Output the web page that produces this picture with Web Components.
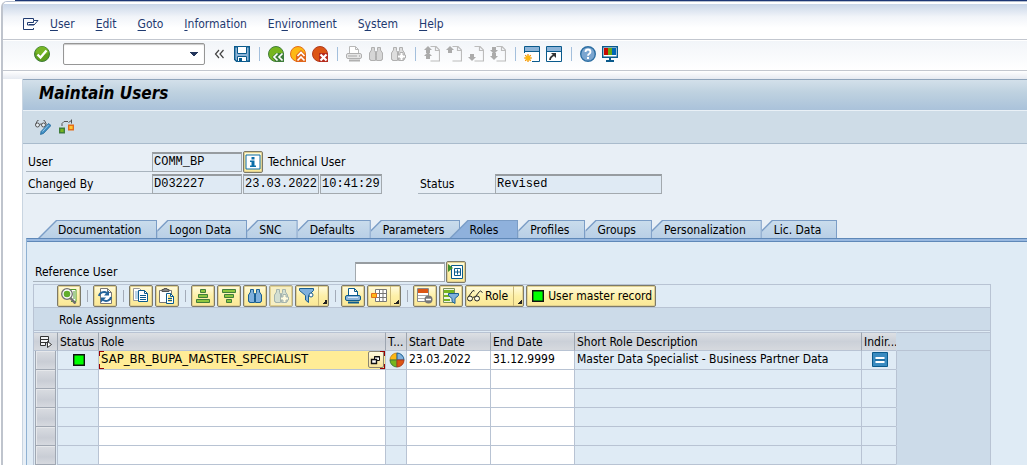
<!DOCTYPE html>
<html lang="en">
<head>
<meta charset="utf-8">
<title>Maintain Users</title>
<style>
body { margin: 0; background: #fff; font: 12px/16px "DejaVu Sans Condensed", "Noto Sans", sans-serif; color: #000; }
</style>
</head>
<body>
<maintain-users></maintain-users>
<script>
const RESET = `
  *, *::before, *::after { box-sizing: border-box; }
  button, input { font: inherit; color: inherit; margin: 0; padding: 0; border: 0; background: none; border-radius: 0; outline: none; }
`;

const finder = (stroke, fill) => `<g fill="${fill}" stroke="${stroke}"><path d="M3.5 1.5h3v3l1 2v8h-5v-1h-1V7l2-3zM9.500 1.500h3V4l2 3v6.500h-1v1h-5v-8l1-2z"/><path d="M7.500 5.500h1v4h-1z"/></g>`;
const page = '<path d="M6.500.5h5.500l3.500 3.500v11h-9M11.500.5v4h4" fill="none" stroke="#bcbcbc" stroke-width="1.200"/>';
const up = (y) => `<path d="M4 ${y}l4 4H6v3H2V${y + 4}H0z" fill="#ababab"/>`;
const down = (y) => `<path d="M4 ${y + 7}l4-4H6v-3H2v3H0z" fill="#ababab"/>`;

const ICONS = {
  menu: '<path d="M10.500 4V2.500H.5v11h10V12" fill="none" stroke="#1f3a70"/><path d="M4.500 6.500h6v-2l4.500 0-4 4.500h-6.500z" fill="#fff" stroke="#1f3a70"/><path d="M6 8.500h5" stroke="#1f3a70"/>',
  check: '<circle cx="8" cy="8" r="7.500" fill="#5f9e1c" stroke="#3f7d3a"/><path d="M1.500 7a6.500 6.500 0 0 1 13 0q-6 3-13 0z" fill="#76b526"/><path d="M3.500 8.500l3 3 6-7" fill="none" stroke="#fff" stroke-width="2.400"/>',
  collapse: '<path d="M7 4L3.500 8 7 12M11.500 4L8 8l3.500 4" fill="none" stroke="#444" stroke-width="1.200"/>',
  save: '<path d="M.7.7h14.600v14.600H2.500L.7 13.500z" fill="#8db4d8" stroke="#0a5a8c" stroke-width="1.400"/><path d="M3.500.5h9v7h-9z" fill="#fff" stroke="#0a5a8c"/><path d="M3.500 10.500h9v5h-9z" fill="#fff" stroke="#0a5a8c"/><path d="M5 12h3v3H5z" fill="#0a5a8c"/>',
  back: '<circle cx="8" cy="8" r="7.500" fill="#76b51f" stroke="#3f7d3a"/><path d="M4 11l4-4h8v9H8z" fill="#3f7d3a"/><path d="M9.500 7.500L6 11l3.500 3.500M14.500 7.500L11 11l3.500 3.500" fill="none" stroke="#fff" stroke-width="1.700"/>',
  exit: '<circle cx="8" cy="8" r="7.500" fill="#fdb813" stroke="#e36c1a"/><path d="M6 9l5-5 5 5v7H6z" fill="#e0661c"/><path d="M7.500 10L11 6.500l3.500 3.500M7.500 14.500L11 11l3.500 3.500" fill="none" stroke="#fff" stroke-width="1.700"/>',
  cancel: '<circle cx="8" cy="8" r="7.500" fill="#dc5514" stroke="#b03a1c"/><path d="M7 7h9v9H7z" fill="#b52a1c"/><path d="M8.500 8.500l6 6M14.500 8.500l-6 6" fill="none" stroke="#fff" stroke-width="2.200"/>',
  printoff: '<path d="M3.500 8V.5h6l3 3V8M9.500.5v3h3" fill="#fff" stroke="#b8b8b8"/><rect x=".5" y="7.500" width="15" height="5" rx="1.500" fill="#e6e6e6" stroke="#b0b0b0"/><path d="M2 10h9" stroke="#a8a8a8"/><path d="M13 10h1" stroke="#999"/><path d="M3 14.500h11" stroke="#b0b0b0" stroke-width="2"/>',
  findoff: finder('#b0b0b0', '#d6d6d6'),
  findnextoff: finder('#b0b0b0', '#dedede') + '<path d="M10 6.500h3v2.500h2.500v3H13v2.500h-3V12H7.500V9H10z" fill="#fff" stroke="#b0b0b0"/>',
  firstpage: page + up(0) + up(6),
  prevpage: page + up(0),
  nextpage: page + down(8),
  lastpage: page + down(1) + down(7),
  newsession: '<path d="M.5.5h15v15h-15z" fill="#fff" stroke="#0a5a8c"/><path d="M1 1h14v4H1z" fill="#8db4d8"/><path d="M0 5.500h16" stroke="#0a5a8c"/><path d="M0 7h8v9H0z" fill="#fff"/><path d="M4 8v8M0 12h8M1.200 9.200l5.600 5.600M6.800 9.200l-5.600 5.600" stroke="#f08c00" stroke-width="1.200"/><circle cx="4" cy="12" r="2.600" fill="#fdb813"/>',
  shortcut: '<path d="M.5.5h15v15h-15z" fill="#fff" stroke="#0a5a8c"/><path d="M1 1h14v4H1z" fill="#8db4d8"/><path d="M0 5.500h16" stroke="#0a5a8c"/><path d="M4 14q0-3 4-5" fill="none" stroke="#333" stroke-width="1.800"/><path d="M5 7h5v5z" fill="#333"/>',
  help: '<circle cx="8" cy="8" r="7.300" fill="#7ba6d0" stroke="#2d6fa3" stroke-width="1.400"/><path d="M5.500 6q0-2.500 2.500-2.500T10.500 6q0 1-1.500 2-1 .6-1 1.800" fill="none" stroke="#fff" stroke-width="1.800"/><path d="M7 11h2v2H7z" fill="#fff"/>',
  monitor: '<path d="M.7.7h14.600v10.600H.7z" fill="#fff" stroke="#0a5a8c" stroke-width="1.400"/><path d="M2 2h4v7H2z" fill="#c80a00"/><path d="M6 2h4v7H6z" fill="#66a814"/><path d="M10 2h4v7h-4z" fill="#0067b5"/><path d="M7 12h2v2H7zM4 14h8v2H4z" fill="#0a5a8c"/>',
  editview: '<path d="M3.500 1.500h-1L.5 5.500M8.500 1.500h1l2 4M5 5.500q1-1.500 2 0" fill="none" stroke="#555"/><circle cx="2.500" cy="6" r="2" fill="#e6eef4" stroke="#555"/><circle cx="8.500" cy="6" r="2" fill="#e6eef4" stroke="#555"/><path d="M13.500 4.500l2.500 2-7.500 8-3 1 .5-3z" fill="#3f8fc4" stroke="#1a5f92" stroke-width=".7"/><path d="M7.500 12.500l6-6.500" stroke="#9ac8e6"/>',
  flow: '<path d="M.7 9.200h4.600v4.600H.7z" fill="#76b51f" stroke="#3f7d3a" stroke-width="1.400"/><path d="M9.700 6.200h4.600v4.600H9.700z" fill="#fdc733" stroke="#e36c1a" stroke-width="1.400"/><path d="M3 7V4.500l2-2h4M12.500 4.500V.5M12.500 1.500l-3 2" fill="none" stroke="#555"/>',
  info: '<path d="M1 1h14v14H1z" fill="#fff" stroke="#0a6da8"/><path d="M6.500 3h3v2.400h-3zM5 6.500h4.500V11.500H11V13H5v-1.500h1.500V8H5z" fill="#0a6da8"/>',
  insert: '<path d="M3.500 1.500h11v13h-11z" fill="#fff" stroke="#0a5a8c"/><path d="M6.500 4.500h6v7h-6z" fill="#fff" stroke="#0a5a8c"/><path d="M9.500 5.500v5M7 8h5" stroke="#0a5a8c"/><path d="M0 0l5 4-5 4z" fill="#3f8f2a"/>',
  detail: '<path d="M9 1.500h6v12h-5" fill="#fff" stroke="#4f9a28"/><path d="M12 4h2M12 6h2M12 8h2M12 10h2" stroke="#4f9a28"/><circle cx="6" cy="6" r="5.300" fill="#fff" stroke="#6f6f6f" stroke-width="1.300"/><circle cx="6" cy="6" r="3.300" fill="#62ad2b"/><path d="M9.500 10l5 5.500" stroke="#6f6f6f" stroke-width="2.600"/>',
  refresh: '<path d="M3.500.5h7l4 4v11h-11z" fill="#fff" stroke="#777"/><path d="M10.500.5v4h4" fill="none" stroke="#777"/><path d="M2 8a5 4.500 0 0 1 8-3" fill="none" stroke="#23639a" stroke-width="2"/><path d="M12 2.500v5H7z" fill="#23639a"/><path d="M14 9a5 4.500 0 0 1-8 3" fill="none" stroke="#23639a" stroke-width="2"/><path d="M4 14.500v-5h5z" fill="#23639a"/>',
  copy: '<path d="M.5.5h6l3 3v9h-9z" fill="#fff" stroke="#999"/><path d="M2 4h3M2 6h3M2 8h3M2 10h3" stroke="#7aa9cf"/><path d="M5.500 2.500h6l3 3v8h-9z" fill="#fff" stroke="#0a5a8c"/><path d="M11.500 2.500v3h3M7 7.500h6M7 9.500h6M7 11.500h6" fill="none" stroke="#0a5a8c"/>',
  paste: '<path d="M.5 2.500h12v12H.5z" fill="#fff" stroke="#777"/><path d="M3 3.500h7v-2H8v-1H5v1H3z" fill="#888" stroke="#555"/><path d="M7.500 5.500h4l3 3v7h-7z" fill="#fff" stroke="#0a5a8c"/><path d="M9 7h2v2h2v5H9z" fill="#f4e08a"/><path d="M11.500 5.500v3h3M9 10.500h4M9 12.500h4" fill="none" stroke="#0a5a8c"/>',
  sortup: '<g fill="#8cc63f" stroke="#3f7d3a"><path d="M5.500 1.500h5v3h-5zM3.500 6.500h9v3h-9zM1.500 11.500h13v3h-13z"/></g>',
  sortdown: '<g fill="#8cc63f" stroke="#3f7d3a"><path d="M1.500 1.500h13v3h-13zM3.500 6.500h9v3h-9zM5.500 11.500h5v3h-5z"/></g>',
  find: finder('#1a5f92', '#7fb0dc'),
  findnext: finder('#a5b4ae', '#d3dfd2') + '<path d="M10 6.500h3v2.500h2.500v3H13v2.500h-3V12H7.500V9H10z" fill="#fffbe0" stroke="#a5b4ae"/>',
  filter: '<path d="M.5.5h14v2l-5 5v7l-3-2.500V7.500l-6-5z" fill="#7fb0dc" stroke="#1a5f92"/><circle cx="12" cy="7" r="2" fill="#fff" stroke="#1a5f92"/>',
  print: '<path d="M3.500 8V.5h6l3 3V8M9.500.5v3h3" fill="#fff" stroke="#0a5a8c"/><rect x=".5" y="7.500" width="15" height="5" rx="1.500" fill="#8db4d8" stroke="#0a5a8c"/><path d="M3 9.500h10" stroke="#d9e9f6"/><path d="M3 14.500h11" stroke="#0a5a8c" stroke-width="2"/>',
  layout: '<path d="M4.500 1.500h11v12h-11zM4 5.500h11M4 9.500h11M8.500 1v12M12 1v12" fill="#fff" stroke="#777"/><path d="M.5 5.500h5v4h-5z" fill="#fdb813" stroke="#e36c1a"/>',
  delrow: '<path d="M.5.5h11v13H.5z" fill="#fff" stroke="#888"/><path d="M1 1h10v4H1z" fill="#dc5514"/><path d="M1 7.500h10M1 10.500h10" stroke="#aaa"/><circle cx="11.500" cy="11.500" r="4" fill="#777"/><path d="M9 11.500h5" stroke="#fff" stroke-width="1.600"/>',
  listfilter: '<path d="M.5.5h11v14H.5z" fill="#eef5e4" stroke="#7a8f5a"/><path d="M1 2h10v3H1zM1 7h7v2H1zM1 11h6v2H1z" fill="#76b51f"/><path d="M5.500 5.500h10v2l-3.500 3v5l-3-2v-3l-3.500-3z" fill="#7fb0dc" stroke="#1a5f92"/>',
  glasses: '<path d="M1.500 8.500L6 2.500l1.500.5M8.500 8.500l4-5 1-.5 2 1.500M6 9.500q1-1.500 2.500 0" fill="none" stroke="#222"/><circle cx="3" cy="10.500" r="2.500" fill="#fffbe0" stroke="#222"/><circle cx="10" cy="10.500" r="2.500" fill="#fffbe0" stroke="#222"/>',
  select: '<path d="M3.500 2.500h8v3h-8zM3.500 5.500h8v3h-8zM3.500 8.500h5v3h-5z" fill="#f2f3f5" stroke="#333"/><path d="M10.500 7.500v6l4-3z" fill="#fff" stroke="#333"/>',
  led: '<path d="M2.700 2.700h10.600v10.600H2.700z" fill="#0f0" stroke="#111" stroke-width="1.400"/>',
  match: '<path d="M6.500 4.500h5v4h-5z" fill="#fff" stroke="#111"/><path d="M6 5h6" stroke="#111"/><path d="M3.500 7.500h5v4h-5z" fill="#fff" stroke="#111" stroke-width="1.400"/>',
  single: '<path d="M8 8V1a7 7 0 0 0-7 7z" fill="#fdb813" stroke="#c98a20"/><path d="M8 8V1a7 7 0 0 1 7 7z" fill="#7fb0dc" stroke="#1a5f92"/><path d="M8 8v7a7 7 0 0 1-7-7z" fill="#76b51f" stroke="#3f7d3a"/><path d="M8 8v7a7 7 0 0 0 7-7z" fill="#dc5514" stroke="#b03a1c"/>',
  equal: '<path d="M.5.5h15v14H.5z" fill="#3a8bc0" stroke="#0a5a8c"/><path d="M3.500 6h9M3.500 10h9" stroke="#fff" stroke-width="2"/><path d="M3 8h10" stroke="#0a5a8c"/>'
};

class Base extends HTMLElement {
  render(css, html) {
    this.attachShadow({ mode: 'open' }).innerHTML = `<style>${RESET}${css}</style>${html}`;
  }
}

customElements.define('gui-icon', class extends Base {
  connectedCallback() {
    if (this.shadowRoot) return;
    this.render(':host { display: block; flex: none; width: 16px; height: 16px; } svg { display: block; }',
      `<svg width="16" height="16" viewBox="0 0 16 16" aria-hidden="true">${ICONS[this.getAttribute('name')] || ''}</svg>`);
  }
});

customElements.define('menu-bar', class extends Base {
  connectedCallback() {
    const items = [['', 'U', 'ser'], ['', 'E', 'dit'], ['', 'G', 'oto'], ['', 'I', 'nformation'], ['En', 'v', 'ironment'], ['S', 'y', 'stem'], ['', 'H', 'elp']];
    this.render(`
      :host { display: block; color: #1f3a70; border-bottom: 1px solid #c3c7cf; background: linear-gradient(#fff 0 2px, #c9d6e8 2px, #f1f4f9 40%, #fff 70%); }
      nav { display: flex; align-items: center; gap: 21px; height: 37px; padding: 7px 20px 0; }
      gui-icon { margin-right: -10px; }
      u { text-underline-offset: 2px; }`,
      `<nav><gui-icon name="menu"></gui-icon>${items.map(([a, k, b]) => `<button>${a}<u>${k}</u>${b}</button>`).join('')}</nav>`);
  }
});

customElements.define('system-toolbar', class extends Base {
  connectedCallback() {
    const groups = [['back', 'exit', 'cancel'], ['printoff', 'findoff', 'findnextoff'], ['firstpage', 'prevpage', 'nextpage', 'lastpage'], ['newsession', 'shortcut'], ['help', 'monitor']];
    const b = (n) => `<button aria-label="${n}"><gui-icon name="${n}"></gui-icon></button>`;
    this.render(`
      :host { display: flex; align-items: center; gap: 6px; height: 31px; padding: 0 31px 2px; border-bottom: 1px solid #c3c7cf; background: linear-gradient(#fff 0 1px, #f2f5f9 1px, #fff); }
      select { appearance: none; width: 142px; height: 22px; margin: 0 1px 0 7px; border: 1px solid #969696; border-radius: 2px; box-shadow: inset 0 1px 1px #c9c9c9;
        --c: linear-gradient(#24365c, #24365c); background: var(--c) 126px 8px / 8px 1px, var(--c) 127px 9px / 6px 1px, var(--c) 128px 10px / 4px 1px, var(--c) 129px 11px / 2px 1px, #fff; background-repeat: no-repeat; }
      i { flex: none; width: 1px; height: 14px; margin: 0 2px 0 3px; background: #a3bfdc; }`,
      `${b('check')}<select aria-label="Command"><option></option></select>${b('collapse')}${b('save')}${groups.map((g) => '<i></i>' + g.map(b).join('')).join('')}`);
  }
});

customElements.define('title-bar', class extends Base {
  connectedCallback() {
    this.render(`
      :host { display: block; border-top: 1px solid #8fa4bb; border-bottom: 1px solid #a9bbcc; background: #cedce7; }
      h1 { margin: 0; height: 31px; padding: 3px 16px; border-bottom: 1px solid #e9f0f6; font: italic bold 17px/20px "DejaVu Sans Condensed", "Noto Sans", sans-serif; background: linear-gradient(#d3e0ea, #bfd2e0 40%, #aac2da); }
      div { display: flex; gap: 8px; height: 32px; padding: 7px 12px; }`,
      `<h1><slot></slot></h1><div><button aria-label="Display or change"><gui-icon name="editview"></gui-icon></button><button aria-label="Check"><gui-icon name="flow"></gui-icon></button></div>`);
  }
});

/* Raised yellow push button; the "split" attribute adds a drop-down part. */
customElements.define('push-button', class extends Base {
  connectedCallback() {
    const split = this.hasAttribute('split');
    this.render(`
      :host { display: flex; flex: none; height: 22px; border: 1px solid #7d7a68; border-radius: 2px; box-shadow: inset 0 0 0 1px #e0d090; background: linear-gradient(#fffbe0, #fdf0a8 50%, #fbe896); }
      :host([disabled]) { background: #f6efc4; border-color: #a9a68f; }
      button { display: flex; align-items: center; justify-content: center; gap: 2px; min-width: 22px; height: 20px; white-space: nowrap; }
      :host([small]) button { min-width: 18px; }
      :host([text]) button { padding: 0 3px; }
      :host([split][text]) button { padding: 0 5px 0 1px; }
      :host([split]) .more { min-width: 10px; width: 10px; padding: 0; border-left: 1px solid #c9b878; background: linear-gradient(135deg, transparent 50%, #222 50%) 3px 13px / 5px 5px no-repeat; }`,
      `<button aria-label="${this.getAttribute('label') || ''}"><gui-icon name="${this.getAttribute('icon')}"></gui-icon><slot></slot></button>${split ? '<button class="more" aria-label="More"></button>' : ''}`);
    if (this.hasAttribute('text')) this.shadowRoot.querySelector('button').removeAttribute('aria-label');
  }
});

customElements.define('text-field', class extends Base {
  connectedCallback() {
    const label = this.getAttribute('label');
    const ro = this.hasAttribute('readonly');
    this.render(`
      :host { display: flex; }
      label { width: var(--label, 126px); height: 20px; padding: 2px; border-bottom: 1px solid #a9b4be; white-space: nowrap; }
      input { width: var(--field, 90px); height: 20px; padding: 0 1px 1px; border: 1px solid #a3a9ae; border-top: 2px solid #979ca0; font: 12px/16px "Liberation Mono", monospace; background: #fff; }
      input[readonly] { background: #dfeaf4; }`,
      `${label ? `<label for="f">${label}</label>` : ''}<input id="f" ${label ? '' : `aria-label="${this.getAttribute('name')}"`} value="${this.getAttribute('value') || ''}" ${ro ? 'readonly' : ''}>`);
  }
});

customElements.define('user-header', class extends Base {
  connectedCallback() {
    this.render(`
      :host { display: grid; row-gap: 1px; padding: 7px 3px 26px; }
      div { display: flex; align-items: center; gap: 1px; }
      span { margin-left: 4px; }
      .date { --field: 76px; } .time { --field: 62px; padding-right: 35px; } .status { --label: 77px; --field: 167px; }`,
      `<div><text-field label="User" value="COMM_BP" readonly></text-field><push-button small icon="info" label="Information"></push-button><span>Technical User</span></div>
       <div><text-field label="Changed By" value="D032227" readonly></text-field><text-field class="date" name="Date" value="23.03.2022" readonly></text-field><text-field class="time" name="Time" value="10:41:29" readonly></text-field><text-field class="status" label="Status" value="Revised" readonly></text-field></div>`);
  }
});

customElements.define('tab-strip', class extends Base {
  connectedCallback() {
    const tabs = ['Documentation', 'Logon Data', 'SNC', 'Defaults', 'Parameters', 'Roles', 'Profiles', 'Groups', 'Personalization', 'Lic. Data'];
    this.render(`
      :host { display: block; margin-left: 3px; }
      .tabs { display: flex; padding-left: 12px; }
      .tabs button { position: relative; isolation: isolate; height: 18px; padding: 2px 16px 0 12px; line-height: 16px; background: #7b9dc6; clip-path: polygon(0 10px, 10px 0, 100% 0, 100% 100%, 0 100%); white-space: nowrap; }
      .tabs button::before { content: ""; position: absolute; z-index: -1; inset: 1px 1px 0 0; background: linear-gradient(#c9dcec, #b9cfe6); clip-path: polygon(0 11px, 11px 0, 100% 0, 100% 100%, 0 100%); }
      .tabs .wide { padding: 2px 16px 0 20px; clip-path: polygon(0 100%, 18px 0, 100% 0, 100% 100%); }
      .tabs .wide::before { clip-path: polygon(2px 100%, 19px 0, 100% 0, 100% 100%); }
      .tabs .on { margin-left: -11px; padding-right: 20px; }
      .tabs .on::before { background: #8fb1dc; }
      .page { border-left: 1px solid #8fb1d2; border-top: 1px solid #5f88b8; background: #dfebf5; }
      .bar { height: 3px; border-bottom: 1px solid #5f88b8; background: #98b8e0; }`,
      `<div class="tabs" role="tablist">${tabs.map((t, i) => `<button role="tab" class="${i === 0 ? 'wide' : ''}${t === 'Roles' ? 'wide on' : ''}" aria-selected="${t === 'Roles'}">${t}</button>`).join('')}</div>
       <div class="page" role="tabpanel"><div class="bar"></div><slot></slot></div>`);
  }
});

customElements.define('grid-toolbar', class extends Base {
  connectedCallback() {
    this.render(`
      :host { display: flex; gap: 2px; height: 23px; padding-left: 23px; border-bottom: 1px solid #b8c3d3; }
      i { flex: none; width: 1px; height: 12px; margin: 5px 3px 0 4px; background: #a3abb8; }`,
      `<push-button icon="detail" label="Details"></push-button><i></i>
       <push-button icon="refresh" label="Refresh"></push-button><i></i>
       <push-button icon="copy" label="Copy"></push-button><push-button icon="paste" label="Paste"></push-button><i></i>
       <push-button icon="sortup" label="Sort ascending"></push-button><push-button icon="sortdown" label="Sort descending"></push-button><push-button icon="find" label="Find"></push-button><push-button icon="findnext" label="Find next" disabled></push-button><push-button icon="filter" label="Filter" split></push-button><i></i>
       <push-button icon="print" label="Print"></push-button><push-button icon="layout" label="Layout" split></push-button><i></i>
       <push-button icon="delrow" label="Delete row"></push-button><push-button icon="listfilter" label="Filter list"></push-button><push-button icon="glasses" text split>Role</push-button><push-button icon="led" text>User master record</push-button>`);
  }
});

customElements.define('role-grid', class extends Base {
  connectedCallback() {
    const blank = '<tr><td><button class="sel" aria-label="Select row"></button></td><td></td><td class="w"></td><td></td><td class="w"></td><td class="w"></td><td></td><td></td><td class="rest"></td></tr>';
    this.render(`
      :host { display: block; border: 1px solid #b8c3d3; border-bottom: 0; }
      h2 { margin: 0; height: 23px; padding: 4px 25px; border-bottom: 1px solid #b8c3d3; font: inherit; background: #ccdbe9; }
      table { width: 100%; margin-top: 1px; table-layout: fixed; border-spacing: 0; }
      th, td { height: 19px; padding: 0 0 0 2px; text-align: left; font-weight: normal; line-height: 16px; white-space: nowrap; overflow: hidden; border-left: 1px solid #b8c3d3; border-bottom: 1px solid #b8c3d3; }
      td { vertical-align: top; }
      th { border-top: 1px solid #b8c3d3; border-left-color: #9da5b0; background: linear-gradient(#dde0e4, #cbd0d8 50%, #d6d9de); }
      th:first-child, td:first-child { padding: 0; border-left: 0; }
      td:first-child { border-bottom: 0; }
      .w { background: #fff; }
      .rest { background: #ccdbe9; border-bottom-color: #ccdbe9; }
      th.rest { border-left-color: #ccdbe9; border-bottom-color: #b8c3d3; }
      th gui-icon { margin-left: 3px; }
      .sel { display: block; width: 21px; height: 19px; margin-left: 1px; border: 1px solid #a0a7b2; border-top: 0; background: linear-gradient(#d9dce1, #c9cdd5 60%, #d6d9df); box-shadow: inset 1px 1px #e6e8eb; }
      .mid { vertical-align: middle; }
      .mid gui-icon { margin: 0 auto; }
      .focus { position: relative; padding: 0; }
      .cell { display: flex; height: 18px; background: #ffec96; }
      .cell input { flex: 1; min-width: 0; padding: 0 2px; height: 16px; font-size: 13px; }
      .cell button { width: 16px; height: 17px; margin: 0 1px; border: 1px solid #8a8570; border-radius: 2px; background: linear-gradient(#fffbe0, #f7e39a); overflow: hidden; }
      .cell button gui-icon { margin: -1px; }
      .focus::after { content: ""; position: absolute; inset: 0; pointer-events: none; --c: linear-gradient(#900, #900);
        background: var(--c) 0 0 / 5px 1px, var(--c) 0 0 / 1px 5px, var(--c) 100% 0 / 5px 1px, var(--c) 100% 0 / 1px 5px, var(--c) 0 100% / 5px 1px, var(--c) 0 100% / 1px 5px, var(--c) 100% 100% / 5px 1px, var(--c) 100% 100% / 1px 5px; background-repeat: no-repeat; }`,
      `<grid-toolbar></grid-toolbar><h2>Role Assignments</h2>
       <table>
        <colgroup><col style="width:23px"><col style="width:41px"><col style="width:287px"><col style="width:21px"><col style="width:84px"><col style="width:84px"><col style="width:287px"><col style="width:35px"><col></colgroup>
        <thead><tr><th aria-label="Select"><gui-icon name="select"></gui-icon></th><th>Status</th><th>Role</th><th>T...</th><th>Start Date</th><th>End Date</th><th>Short Role Description</th><th>Indir...</th><th class="rest"></th></tr></thead>
        <tbody><tr><td><button class="sel" aria-label="Select row"></button></td><td class="mid"><gui-icon name="led"></gui-icon></td>
         <td class="focus"><div class="cell"><input aria-label="Role" value="SAP_BR_BUPA_MASTER_SPECIALIST"><button aria-label="Search help"><gui-icon name="match"></gui-icon></button></div></td>
         <td class="mid"><gui-icon name="single"></gui-icon></td><td class="w">23.03.2022</td><td class="w">31.12.9999</td><td>Master Data Specialist - Business Partner Data</td><td class="mid"><gui-icon name="equal"></gui-icon></td><td class="rest"></td></tr>
        ${blank.repeat(5)}</tbody>
       </table>`);
  }
});

customElements.define('maintain-users', class extends Base {
  connectedCallback() {
    this.render(`
      :host { display: block; }
      .desk { height: 1px; margin-left: 15px; background: #1c3674; }
      .frame { min-height: calc(100vh - 1px); margin-left: 1px; border-left: 2px solid #bfc4cd; border-top: 1px solid #b4bed0; border-top-left-radius: 6px; overflow: hidden; }
      main { margin-left: 19px; border-left: 1px solid #c9d5e1; background: #e8eff6; }
      .gap { height: 8px; background: linear-gradient(#fff, #e6eaf1); }
      .ref { display: flex; align-items: center; gap: 1px; padding: 19px 6px 1px; --label: 322px; }
      role-grid { margin: 0 36px 0 6px; }`,
      `<div class="desk"></div><div class="frame"><menu-bar></menu-bar><system-toolbar></system-toolbar><div class="gap"></div>
       <main><title-bar>Maintain Users</title-bar><user-header></user-header>
        <tab-strip><div class="ref"><text-field label="Reference User"></text-field><push-button small icon="insert" label="Multiple selection"></push-button></div><role-grid></role-grid></tab-strip>
       </main></div>`);
  }
});
</script>
</body>
</html>
